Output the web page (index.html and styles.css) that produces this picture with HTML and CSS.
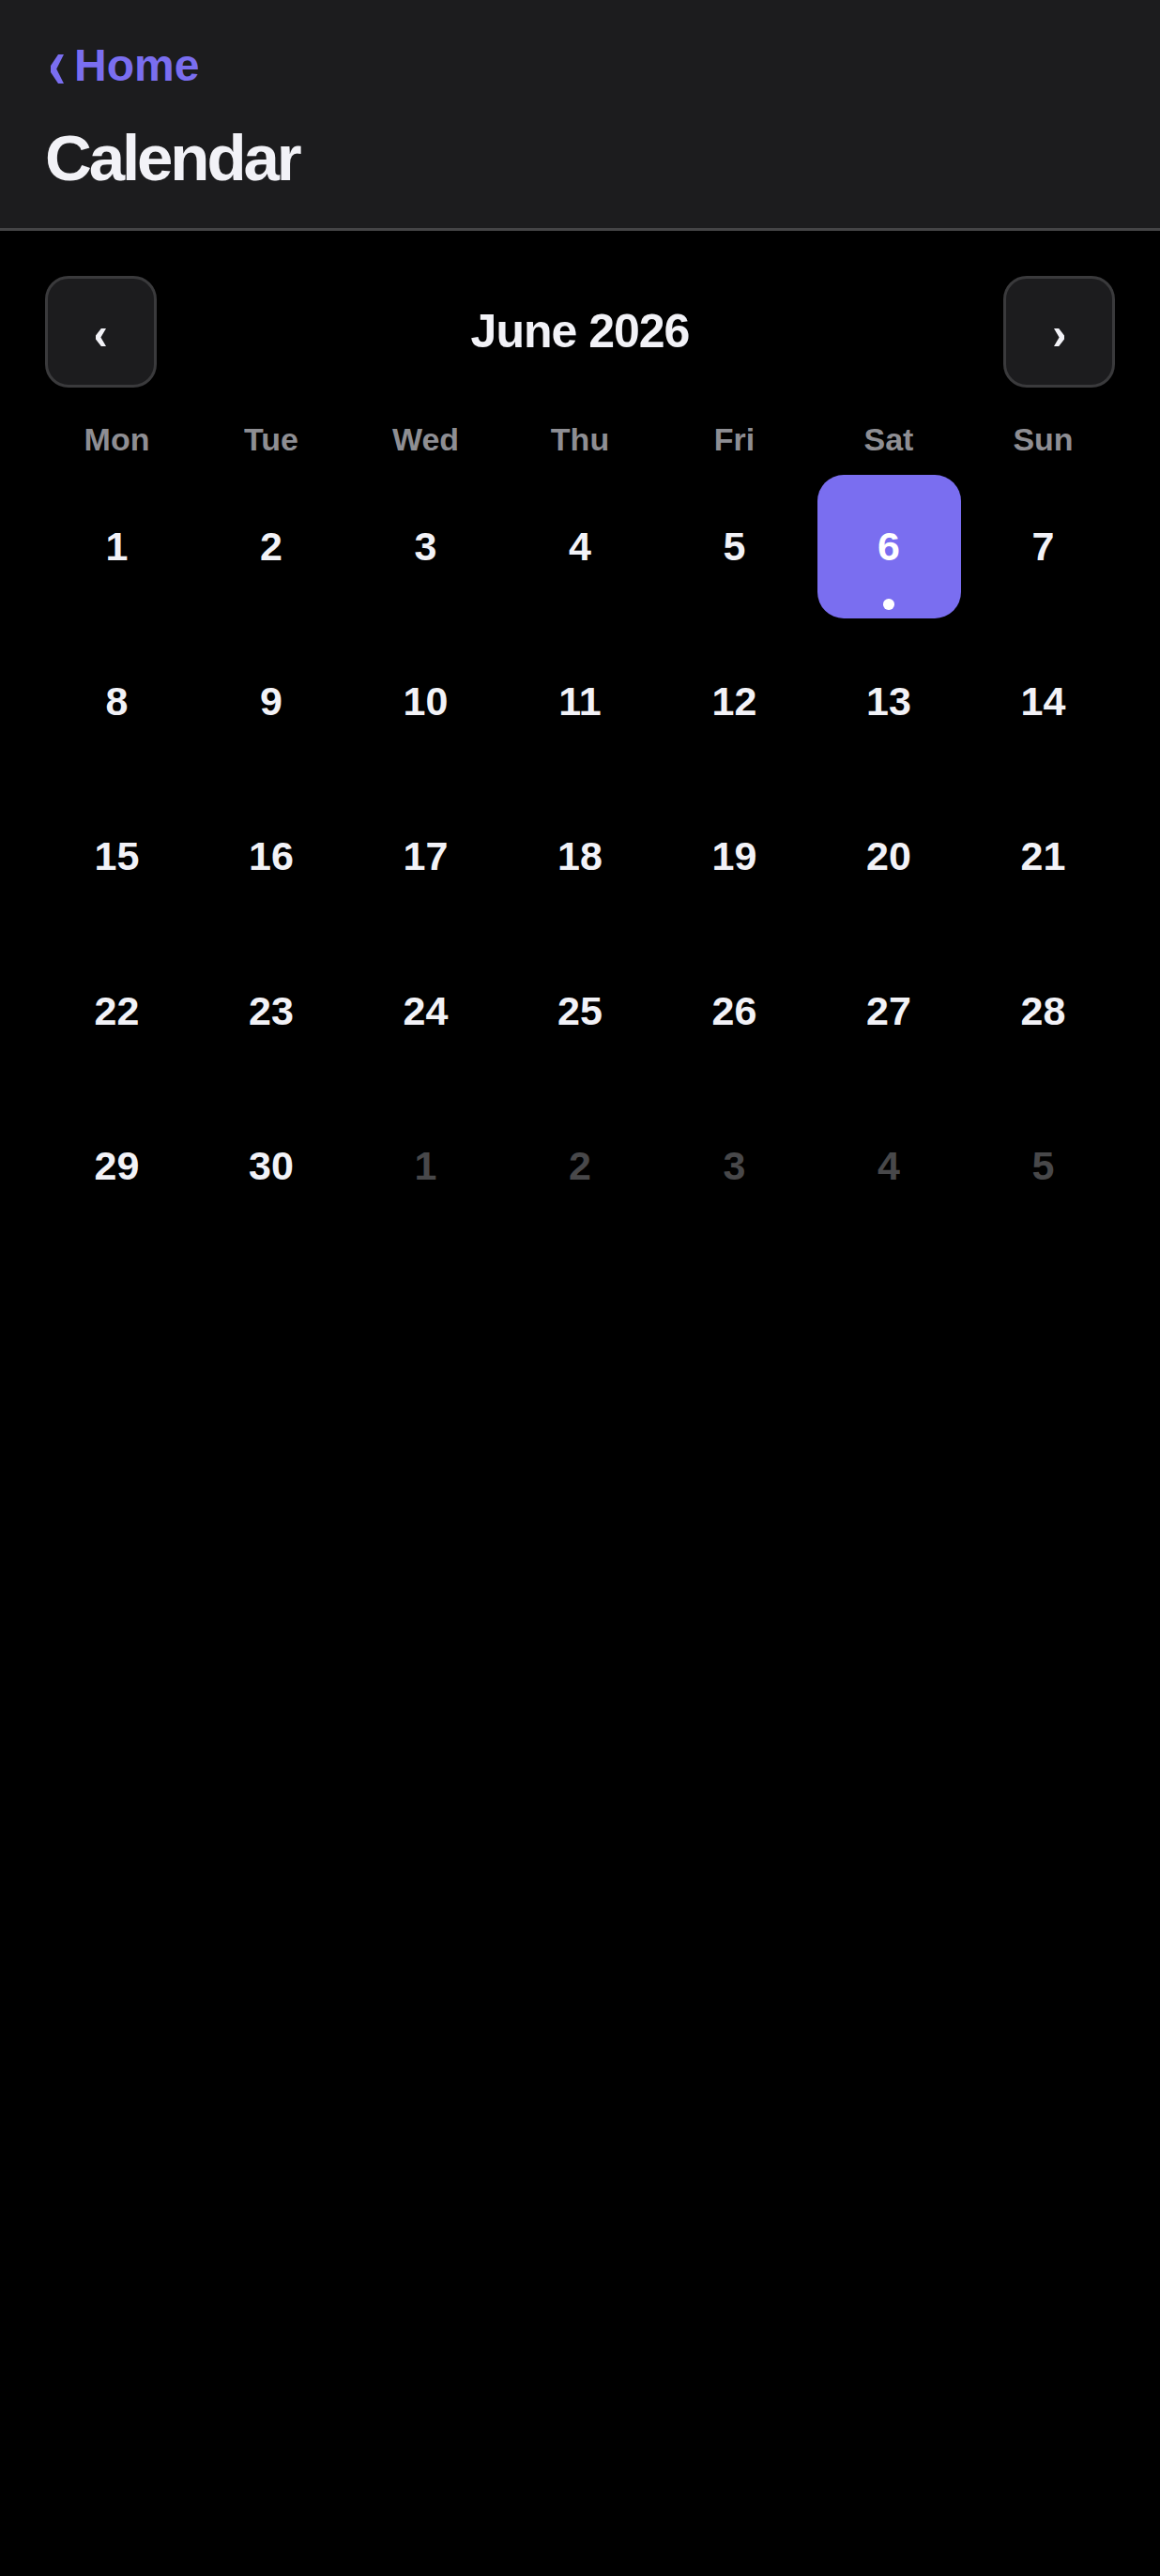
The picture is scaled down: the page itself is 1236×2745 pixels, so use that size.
FILE: index.html
```html
<!DOCTYPE html>
<html lang="en">
<head>
<meta charset="utf-8">
<title>Calendar</title>
<link rel="stylesheet" href="styles.css">
</head>
<body>
<header class="topbar">
  <a class="back" href="#">
    <svg class="back-icon" width="14" height="31" viewBox="0 0 14 31"><polygon points="8,0 14,0 6.2,15.5 14,31 8,31 0,19 0,12" fill="#7a6ef0"/></svg>
    <span class="back-text">Home</span>
  </a>
  <h1 class="title">Calendar</h1>
</header>
<main class="content">
  <div class="nav">
    <button class="nav-btn" aria-label="Previous month">
      <svg class="chev" width="11" height="19" viewBox="0 0 11 19"><polygon points="5.8,0 11,0 5.4,9.5 11,19 5.8,19 0,11.5 0,7.5" fill="#f2f2f7"/></svg>
    </button>
    <div class="month">June 2026</div>
    <button class="nav-btn" aria-label="Next month">
      <svg class="chev" width="11" height="19" viewBox="0 0 11 19"><polygon points="5.2,0 0,0 5.6,9.5 0,19 5.2,19 11,11.5 11,7.5" fill="#f2f2f7"/></svg>
    </button>
  </div>
  <div class="weekdays">
    <div class="wd">Mon</div><div class="wd">Tue</div><div class="wd">Wed</div><div class="wd">Thu</div><div class="wd">Fri</div><div class="wd">Sat</div><div class="wd">Sun</div>
  </div>
  <div class="days">
    <div class="day">1</div><div class="day">2</div><div class="day">3</div><div class="day">4</div><div class="day">5</div><div class="day selected">6<span class="dot"></span></div><div class="day">7</div>
    <div class="day">8</div><div class="day">9</div><div class="day">10</div><div class="day">11</div><div class="day">12</div><div class="day">13</div><div class="day">14</div>
    <div class="day">15</div><div class="day">16</div><div class="day">17</div><div class="day">18</div><div class="day">19</div><div class="day">20</div><div class="day">21</div>
    <div class="day">22</div><div class="day">23</div><div class="day">24</div><div class="day">25</div><div class="day">26</div><div class="day">27</div><div class="day">28</div>
    <div class="day">29</div><div class="day">30</div><div class="day muted">1</div><div class="day muted">2</div><div class="day muted">3</div><div class="day muted">4</div><div class="day muted">5</div>
  </div>
</main>
</body>
</html>
```

FILE: styles.css
```css
* { box-sizing: border-box; }
html, body {
  margin: 0;
  padding: 0;
  background: #000;
  font-family: "Liberation Sans", Arial, Helvetica, sans-serif;
  font-weight: 700;
  color: #f2f2f7;
}
.topbar {
  background: #1c1c1e;
  border-bottom: 3px solid #444446;
  padding: 42px 48px 34px 48px;
}
.back {
  display: flex;
  align-items: center;
  height: 56px;
  text-decoration: none;
  color: #7a6ef0;
  padding-left: 6px;
}
.back-icon {
  display: block;
  margin-top: 7px;
  margin-right: 11px;
}
.back-text {
  font-size: 48px;
  line-height: 56px;
}
.title {
  margin: 31px 0 0 0;
  font-size: 69px;
  line-height: 80px;
  letter-spacing: -3.1px;
  font-weight: 700;
  color: #f2f2f7;
}
.content {
  padding: 48px 48px 0 48px;
}
.nav {
  display: flex;
  align-items: center;
  justify-content: space-between;
  height: 119px;
}
.nav-btn {
  width: 119px;
  height: 119px;
  padding: 12px 0 0 0;
  margin: 0;
  background: #1c1c1e;
  border: 3px solid #3a3a3c;
  border-radius: 25px;
  display: flex;
  align-items: center;
  justify-content: center;
}
.chev { display: block; }
.month {
  font-size: 50px;
  line-height: 54px;
  letter-spacing: -1px;
  color: #f2f2f7;
  margin-bottom: 2px;
}
.weekdays {
  margin-top: 35px;
  display: grid;
  grid-template-columns: repeat(7, 1fr);
  column-gap: 11.5px;
}
.wd {
  text-align: center;
  font-size: 34px;
  line-height: 40px;
  color: #8e8e93;
}
.days {
  margin-top: 18px;
  display: grid;
  grid-template-columns: repeat(7, 1fr);
  column-gap: 11.5px;
  row-gap: 12px;
}
.day {
  position: relative;
  aspect-ratio: 1 / 1;
  display: flex;
  align-items: center;
  justify-content: center;
  font-size: 43px;
  line-height: 50px;
  padding-bottom: 2px;
  color: #f2f2f7;
  border-radius: 28px;
}
.day.muted { color: #48484a; }
.day.selected {
  background: #7a6ef0;
  color: #fff;
}
.dot {
  position: absolute;
  left: 50%;
  bottom: 9.5px;
  width: 11.5px;
  height: 11.5px;
  margin-left: -5.75px;
  border-radius: 50%;
  background: #fff;
}
```
